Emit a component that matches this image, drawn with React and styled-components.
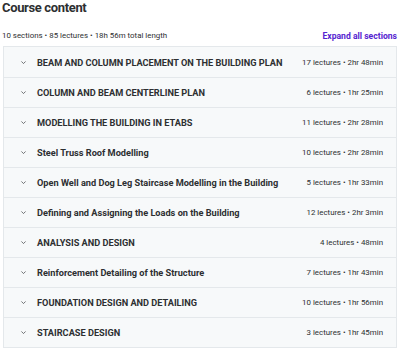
import styled, { createGlobalStyle } from 'styled-components';

const GlobalStyle = createGlobalStyle`
  * { box-sizing: border-box; }
  body {
    margin: 0;
    background: #ffffff;
    font-family: Roboto, "Noto Sans", sans-serif;
    color: #2d2f31;
  }
`;

const Wrapper = styled.section`
  display: flex;
  flex-flow: column nowrap;
  width: 400px;
  padding: 0 3px 0 2px;
`;

const Title = styled.h2`
  margin: 0;
  font-size: 13px;
  line-height: 16px;
  font-weight: 700;
  letter-spacing: -0.35px;
  color: #2d2f31;
`;

const MetaBar = styled.div`
  display: flex;
  align-items: center;
  justify-content: space-between;
  margin-top: 14px;
  margin-bottom: 5px;
  height: 11px;
`;

const Meta = styled.span`
  font-size: 7.9px;
  color: #2d2f31;
`;

const ExpandLink = styled.button`
  padding: 0;
  border: none;
  background: none;
  font-family: inherit;
  font-size: 8.6px;
  font-weight: 700;
  color: #5624d0;
  cursor: pointer;
`;

const List = styled.div`
  display: flex;
  flex-flow: column nowrap;
  margin-left: 1px;
  border: 1px solid #e4e8eb;
`;

const Row = styled.div`
  display: flex;
  align-items: center;
  height: 30px;
  padding: 0 13px 0 16px;
  background: #f7f9fa;
  border-top: ${({ $first }) => ($first ? 'none' : '1px solid #e4e8eb')};
`;

const Chevron = styled.svg`
  flex: none;
  width: 7px;
  height: 7px;
  margin-right: 10px;
`;

const SectionTitle = styled.span`
  flex: 1;
  font-size: 9.2px;
  font-weight: 700;
  color: #2d2f31;
  white-space: nowrap;
`;

const SectionInfo = styled.span`
  font-size: 7.9px;
  color: #2d2f31;
  white-space: nowrap;
`;

const sections = [
  ['BEAM AND COLUMN PLACEMENT ON THE BUILDING PLAN', 17, '2hr 48min'],
  ['COLUMN AND BEAM CENTERLINE PLAN', 6, '1hr 25min'],
  ['MODELLING THE BUILDING IN ETABS', 11, '2hr 28min'],
  ['Steel Truss Roof Modelling', 10, '2hr 28min'],
  ['Open Well and Dog Leg Staircase Modelling in the Building', 5, '1hr 33min'],
  ['Defining and Assigning the Loads on the Building', 12, '2hr 3min'],
  ['ANALYSIS AND DESIGN', 4, '48min'],
  ['Reinforcement Detailing of the Structure', 7, '1hr 43min'],
  ['FOUNDATION DESIGN AND DETAILING', 10, '1hr 56min'],
  ['STAIRCASE DESIGN', 3, '1hr 45min'],
];

export default function App() {
  return (
    <>
      <GlobalStyle />
      <Wrapper>
        <Title>Course content</Title>
        <MetaBar>
          <Meta>10 sections • 85 lectures • 18h 56m total length</Meta>
          <ExpandLink>Expand all sections</ExpandLink>
        </MetaBar>
        <List>
          {sections.map(([title, lectures, length], i) => (
            <Row key={title} $first={i === 0}>
              <Chevron viewBox="0 0 10 10">
                <path d="M2 3.5 L5 6.5 L8 3.5" fill="none" stroke="#4a4d50" strokeWidth="1.1" />
              </Chevron>
              <SectionTitle>{title}</SectionTitle>
              <SectionInfo>
                {lectures} lectures • {length}
              </SectionInfo>
            </Row>
          ))}
        </List>
      </Wrapper>
    </>
  );
}
